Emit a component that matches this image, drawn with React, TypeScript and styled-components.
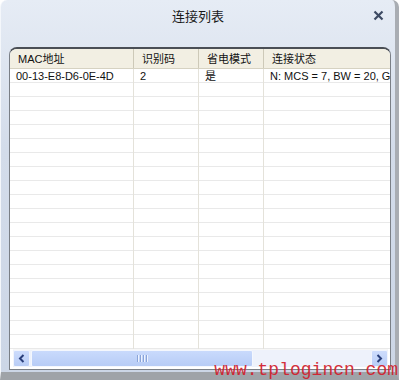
import React from 'react';
import styled, { createGlobalStyle } from 'styled-components';

const GlobalStyle = createGlobalStyle`
  html, body { margin: 0; padding: 0; background: #fff; overflow: hidden; }
  body { font-family: Tahoma, "Liberation Sans", "Noto Sans CJK SC", sans-serif; }
`;

const Window = styled.div`
  position: relative;
  width: 399px;
  height: 380px;
  box-sizing: border-box;
  display: flex;
  flex-direction: column;
  background: linear-gradient(#e6ecf5, #d3dcea 40%, #ccd6e6);
  border-top-left-radius: 7px;
  border-top-right-radius: 7px;
  border-left: 1px solid #f4f7fb;
  border-right: 4px solid #a9adb3;
  border-bottom: 8px solid #9fa3a8;
`;

const TitleBar = styled.div`
  height: 33px;
  flex: none;
  display: flex;
  align-items: center;
  justify-content: center;
  position: relative;
  font-size: 13px;
  color: #1a1a1a;
  padding-bottom: 2px;
  box-sizing: border-box;
`;

const CloseButton = styled.span`
  position: absolute;
  right: 10px;
  top: 8px;
  width: 14px;
  height: 14px;
  display: flex;
  align-items: center;
  justify-content: center;
`;

const Panel = styled.div`
  flex: 1;
  margin: 14px 4px 2px 8px;
  display: flex;
  flex-direction: column;
  background: #fff;
  border: 1px solid #7a7f86;
  border-top: 2px solid #4a4e55;
  border-radius: 8px 8px 0 0;
  overflow: hidden;
`;

const Grid = styled.div`
  flex: 1;
  display: flex;
  flex-direction: column;
  background-image: repeating-linear-gradient(
    to bottom,
    transparent 0 13px,
    #e9e9e9 13px 14px
  );
  background-position: 0 20px;
  position: relative;
`;

const Row = styled.div<{ $header?: boolean }>`
  display: grid;
  grid-template-columns: 124px 65px 65px 1fr;
  height: ${p => (p.$header ? '19px' : '14px')};
  flex: none;
  background: ${p => (p.$header ? '#f2efe3' : 'transparent')};
  border-bottom: ${p => (p.$header ? '1px solid #d6d2c2' : 'none')};
  font-size: 11px;
  line-height: ${p => (p.$header ? '21px' : '15px')};
  color: #111;
`;

const Cell = styled.div<{ $header?: boolean }>`
  padding-left: ${p => (p.$header ? '8px' : '6px')};
  border-right: 1px solid ${p => (p.$header ? '#cdc9b8' : 'transparent')};
  white-space: nowrap;
  overflow: hidden;
  &:last-child { border-right: none; }
`;

const ColumnLines = styled.div`
  position: absolute;
  top: 20px;
  bottom: 0;
  left: 0;
  right: 0;
  pointer-events: none;
  display: grid;
  grid-template-columns: 124px 65px 65px 1fr;
`;

const ColumnLine = styled.div`
  border-right: 1px solid #e4e2da;
  &:last-child { border-right: none; }
`;

const ScrollBar = styled.div`
  height: 17px;
  flex: none;
  margin: 0 2px 2px 3px;
  display: flex;
  align-items: stretch;
  background: #eef2fb;
  border-top: 1px solid #f7f7f7;
`;

const ArrowButton = styled.div`
  width: 17px;
  flex: none;
  display: flex;
  align-items: center;
  justify-content: center;
  background: linear-gradient(#cddcfc, #b9cdf6);
  border: 1px solid #f2f5fc;
  box-sizing: border-box;
  border-radius: 2px;
`;

const Track = styled.div`
  flex: 1;
  display: flex;
  padding: 0 1px;
`;

const Thumb = styled.div`
  width: 222px;
  display: flex;
  align-items: center;
  justify-content: center;
  background: linear-gradient(#c9dafc, #b7ccf6);
  border: 1px solid #f4f7fd;
  border-radius: 2px;
  box-sizing: border-box;
  gap: 1px;
`;

const Grip = styled.span`
  width: 1px;
  height: 7px;
  background: #8aa4d8;
  box-shadow: 1px 0 0 #eef3fe;
  margin-right: 1px;
`;

const Watermark = styled.div`
  position: absolute;
  right: -3px;
  bottom: -8px;
  font-family: "Liberation Mono", "DejaVu Sans Mono", monospace;
  font-size: 18px;
  line-height: 20px;
  color: #d21d2c;
  opacity: 0.92;
  white-space: nowrap;
`;

const columns = ['MAC地址', '识别码', '省电模式', '连接状态'];
const rows = [['00-13-E8-D6-0E-4D', '2', '是', 'N: MCS = 7, BW = 20, GI']];

export default function App() {
  const blankRows = Array.from({ length: 18 });
  return (
    <>
      <GlobalStyle />
      <Window>
        <TitleBar>
          连接列表
          <CloseButton>
            <svg width="11" height="11" viewBox="0 0 11 11">
              <path d="M1.5 1.5 L9.5 9.5 M9.5 1.5 L1.5 9.5" stroke="#3d4a63" strokeWidth="2.2" />
            </svg>
          </CloseButton>
        </TitleBar>
        <Panel>
          <Grid>
            <Row $header>
              {columns.map(c => (
                <Cell $header key={c}>{c}</Cell>
              ))}
            </Row>
            {rows.map((r, i) => (
              <Row key={i}>
                {r.map((v, j) => (
                  <Cell key={j}>{v}</Cell>
                ))}
              </Row>
            ))}
            {blankRows.map((_, i) => (
              <Row key={`b${i}`} />
            ))}
            <ColumnLines>
              <ColumnLine />
              <ColumnLine />
              <ColumnLine />
              <ColumnLine />
            </ColumnLines>
          </Grid>
          <ScrollBar>
            <ArrowButton>
              <svg width="7" height="9" viewBox="0 0 7 9">
                <path d="M5.5 1 L2 4.5 L5.5 8" stroke="#2a3f7a" strokeWidth="2" fill="none" />
              </svg>
            </ArrowButton>
            <Track>
              <Thumb>
                <Grip />
                <Grip />
                <Grip />
                <Grip />
              </Thumb>
            </Track>
            <ArrowButton>
              <svg width="7" height="9" viewBox="0 0 7 9">
                <path d="M1.5 1 L5 4.5 L1.5 8" stroke="#2a3f7a" strokeWidth="2" fill="none" />
              </svg>
            </ArrowButton>
          </ScrollBar>
        </Panel>
        <Watermark>www.tplogincn.com</Watermark>
      </Window>
    </>
  );
}
